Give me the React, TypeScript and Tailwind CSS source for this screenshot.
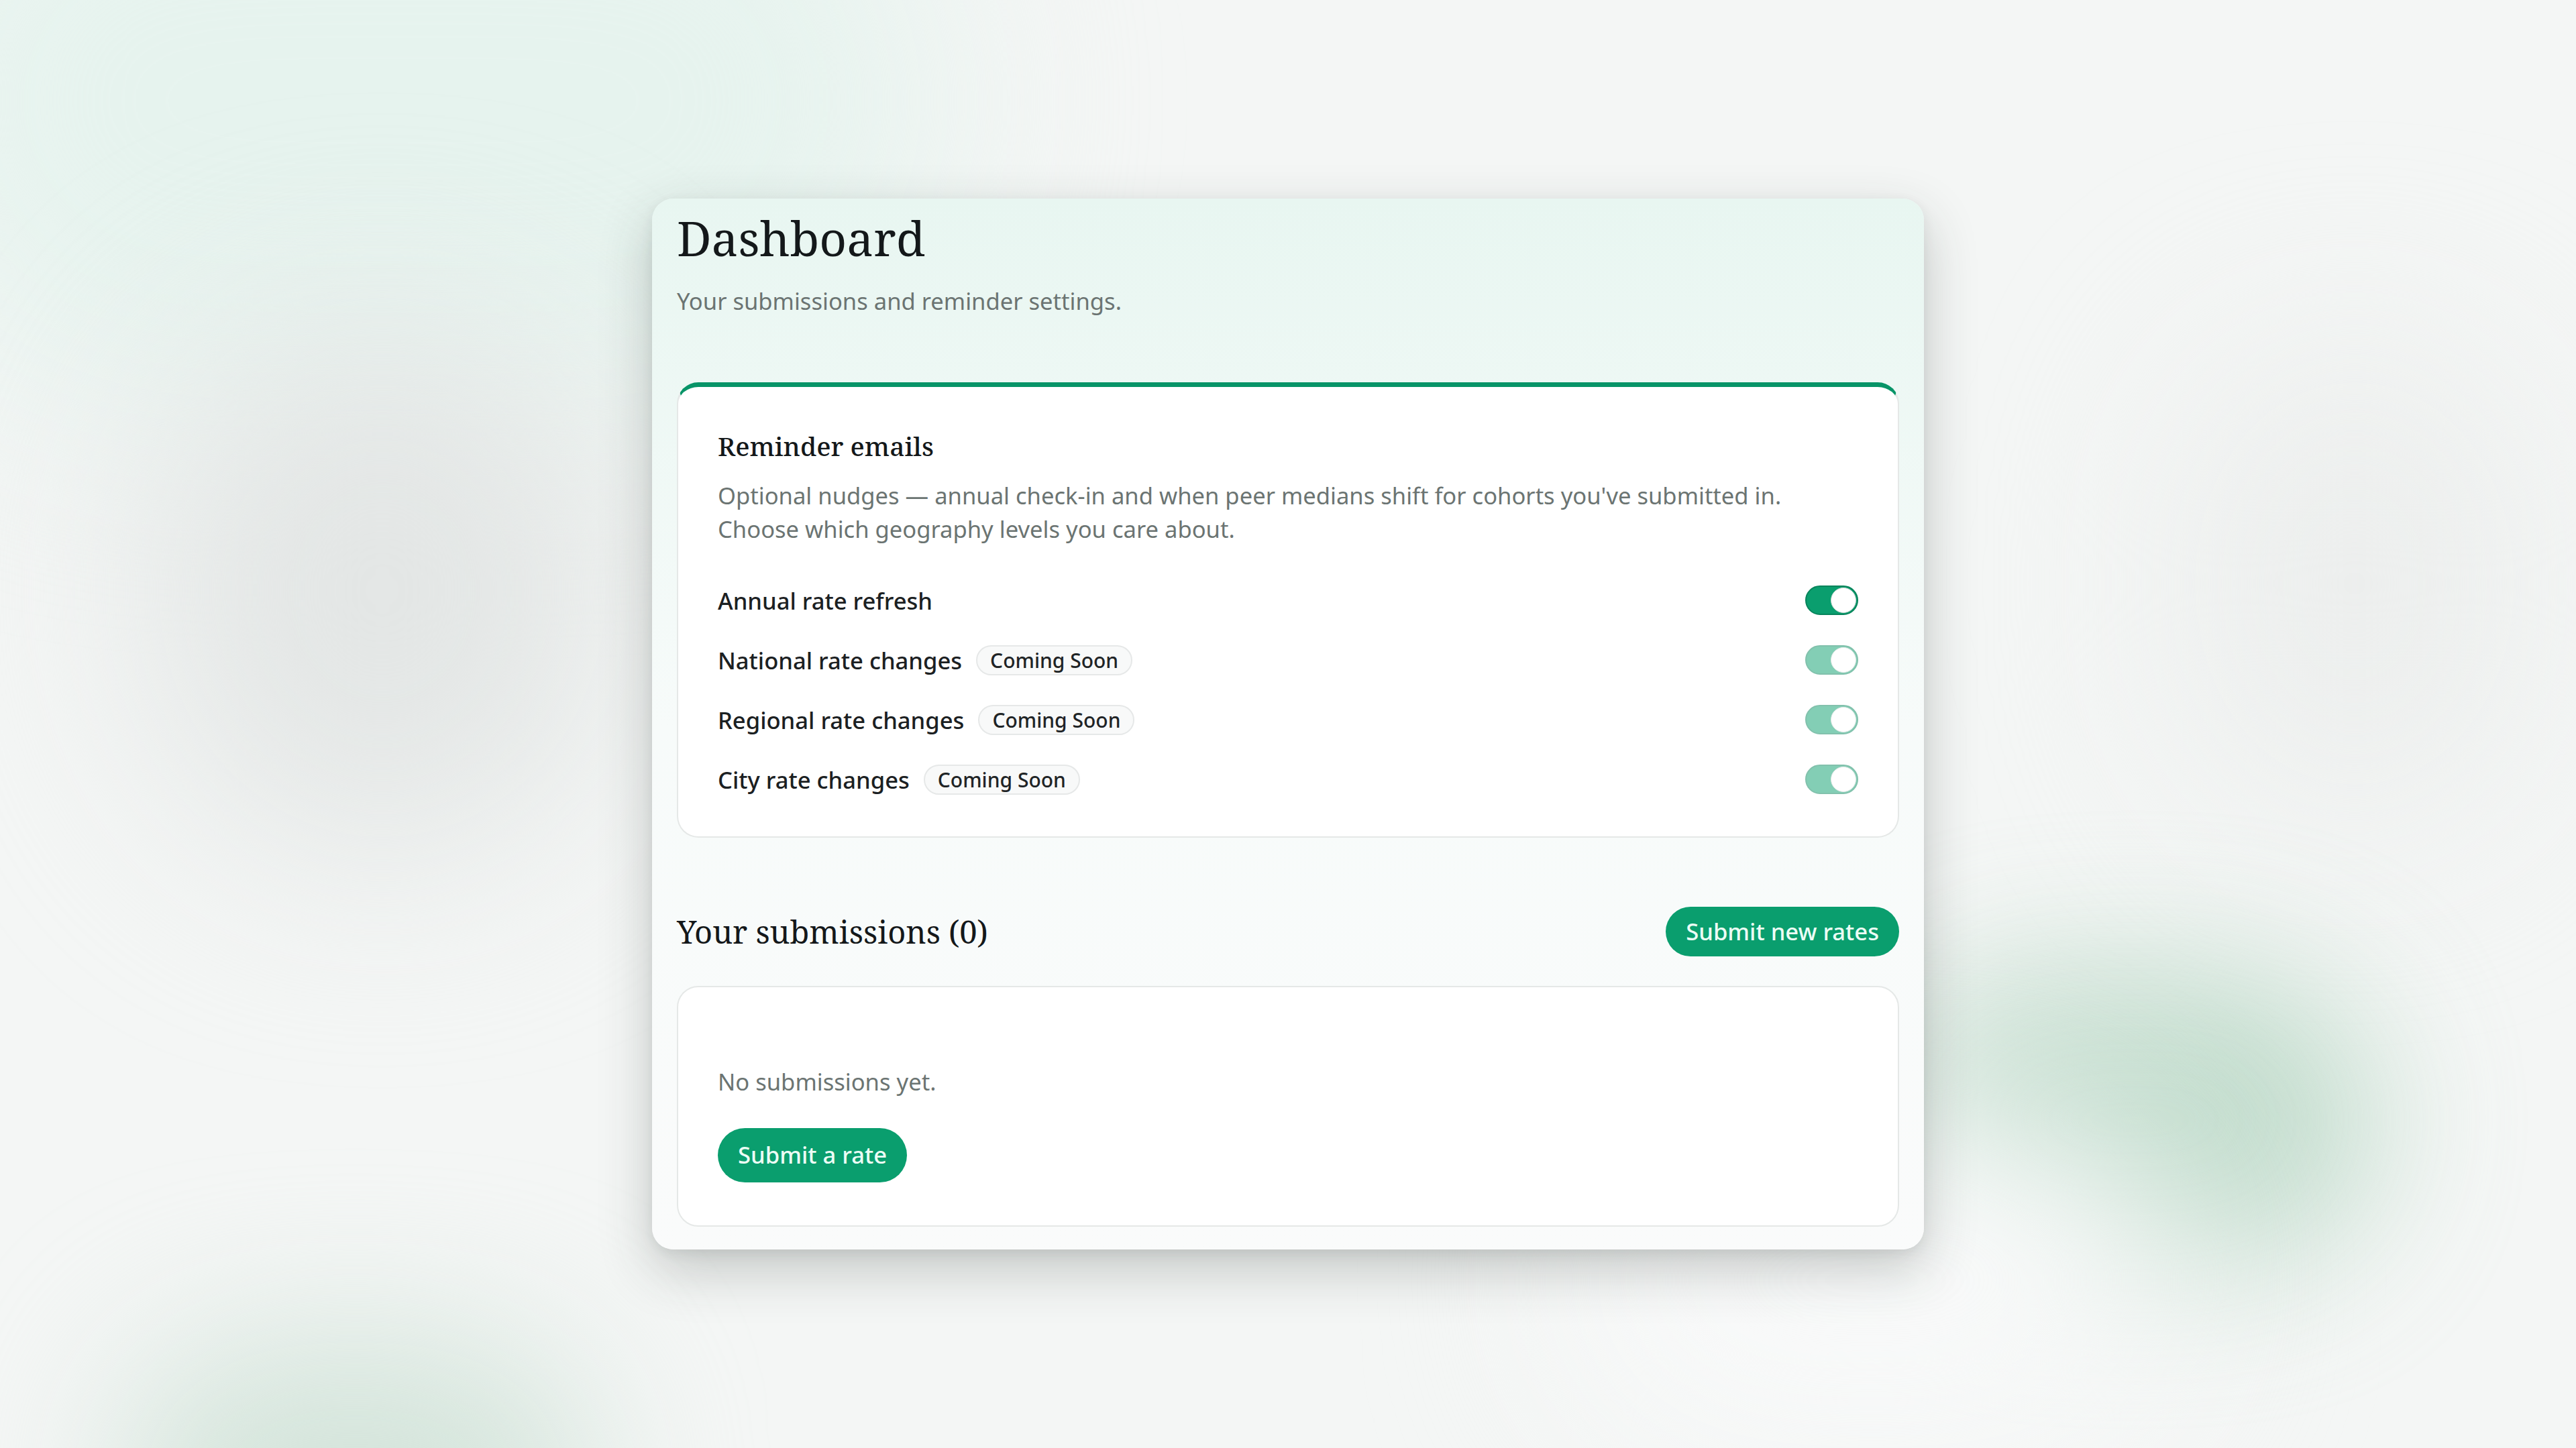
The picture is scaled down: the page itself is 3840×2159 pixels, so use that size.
import React from 'react';

const reminders = [
  { label: 'Annual rate refresh', soon: false },
  { label: 'National rate changes', soon: true },
  { label: 'Regional rate changes', soon: true },
  { label: 'City rate changes', soon: true },
];

const Toggle = ({ disabled = false }: { disabled?: boolean }) => (
  <button
    type="button"
    role="switch"
    aria-checked="true"
    disabled={disabled}
    className={`flex h-[44px] w-[79px] shrink-0 items-center rounded-full border-2 border-[#07845b] bg-[#0a9e6e] p-[1px] ${
      disabled ? 'opacity-50' : ''
    }`}
  >
    <span className="ml-auto h-[38px] w-[38px] rounded-full border border-[#cfd6d3] bg-white" />
  </button>
);

const Badge = ({ children }: { children: React.ReactNode }) => (
  <span className="flex h-[45px] items-center rounded-full border-2 border-[#e6e8e8] bg-[#f8f9f9] px-[19px] text-[30px] font-medium text-[#1f2426]">
    {children}
  </span>
);

const Dashboard = () => {
  return (
    <div className="relative flex min-h-screen items-center justify-center overflow-hidden bg-[#f4f6f5] font-['Noto_Sans','Open_Sans',sans-serif]">
      {/* soft background wash */}
      <div className="pointer-events-none absolute -left-[200px] -top-[300px] h-[900px] w-[1600px] rounded-full bg-[#e6f3ee] blur-[160px]" />
      <div className="pointer-events-none absolute left-[220px] top-[480px] h-[800px] w-[700px] rounded-full bg-[#e3e6e5] blur-[150px]" />
      <div className="pointer-events-none absolute right-[80px] top-[520px] h-[700px] w-[500px] rounded-full bg-[#eceeed] blur-[150px]" />
      <div className="pointer-events-none absolute right-[300px] top-[1450px] h-[440px] w-[720px] rounded-full bg-[#b7d7c4] opacity-85 blur-[110px]" />
      <div className="pointer-events-none absolute -bottom-[260px] left-[180px] h-[420px] w-[700px] rounded-full bg-[#d3e4da] blur-[120px]" />
      <div className="pointer-events-none absolute bottom-[0px] right-[600px] h-[500px] w-[900px] rounded-full bg-[#f8f9f9] blur-[140px]" />

      <main className="relative w-[1896px] rounded-[32px] bg-gradient-to-b from-[#e8f6f1] via-[#f7fbfa] via-50% to-[#fafbfb] px-[37px] pb-[34px] pt-[16px] shadow-[0_30px_80px_rgba(40,50,45,0.24),0_6px_18px_rgba(40,50,45,0.08)]">
        <header>
          <h1 className="font-['Noto_Serif','DejaVu_Serif',serif] text-[71px] leading-[1.2] text-[#14181a]">
            Dashboard
          </h1>
          <p className="mt-[26px] text-[34.6px] leading-[49px] text-[#6b7472]">
            Your submissions and reminder settings.
          </p>
        </header>

        <section className="mt-[97px] rounded-[32px] border-2 border-t-[7px] border-[#e5e8e7] border-t-[#079467] bg-white px-[59px] pb-[60px] pt-[60px]">
          <h2 className="font-['Noto_Serif','DejaVu_Serif',serif] text-[39px] font-medium leading-[55px] text-[#14181a]">
            Reminder emails
          </h2>
          <p className="mt-[22px] text-[34.6px] leading-[50px] text-[#6b7472]">
            Optional nudges — annual check-in and when peer medians shift for cohorts you've submitted in.
            <br />
            Choose which geography levels you care about.
          </p>

          <div className="mt-[57px] flex flex-col gap-[40px]">
            {reminders.map((r) => (
              <div key={r.label} className="flex h-[49px] items-center justify-between">
                <div className="flex items-center gap-[21px]">
                  <span className="text-[34.6px] font-medium leading-[49px] text-[#1b2022]">{r.label}</span>
                  {r.soon && <Badge>Coming Soon</Badge>}
                </div>
                <Toggle disabled={r.soon} />
              </div>
            ))}
          </div>
        </section>

        <div className="mt-[103px] flex items-center justify-between">
          <h2 className="font-['Noto_Serif','DejaVu_Serif',serif] text-[47px] leading-[60px] text-[#14181a]">
            Your submissions (0)
          </h2>
          <button
            type="button"
            className="flex h-[74px] items-center rounded-full bg-[#0a9e6e] px-[30px] text-[34.6px] font-medium text-[#ecfdf5]"
          >
            Submit new rates
          </button>
        </div>

        <section className="mt-[44px] rounded-[32px] border-2 border-[#e5e8e7] bg-white px-[59px] pb-[64px] pt-[116px]">
          <p className="text-[34.6px] leading-[49px] text-[#6b7472]">No submissions yet.</p>
          <button
            type="button"
            className="mt-[45px] flex h-[81px] items-center rounded-full bg-[#0a9e6e] px-[30px] text-[34.6px] font-medium text-[#ecfdf5]"
          >
            Submit a rate
          </button>
        </section>
      </main>
    </div>
  );
};

export default Dashboard;
